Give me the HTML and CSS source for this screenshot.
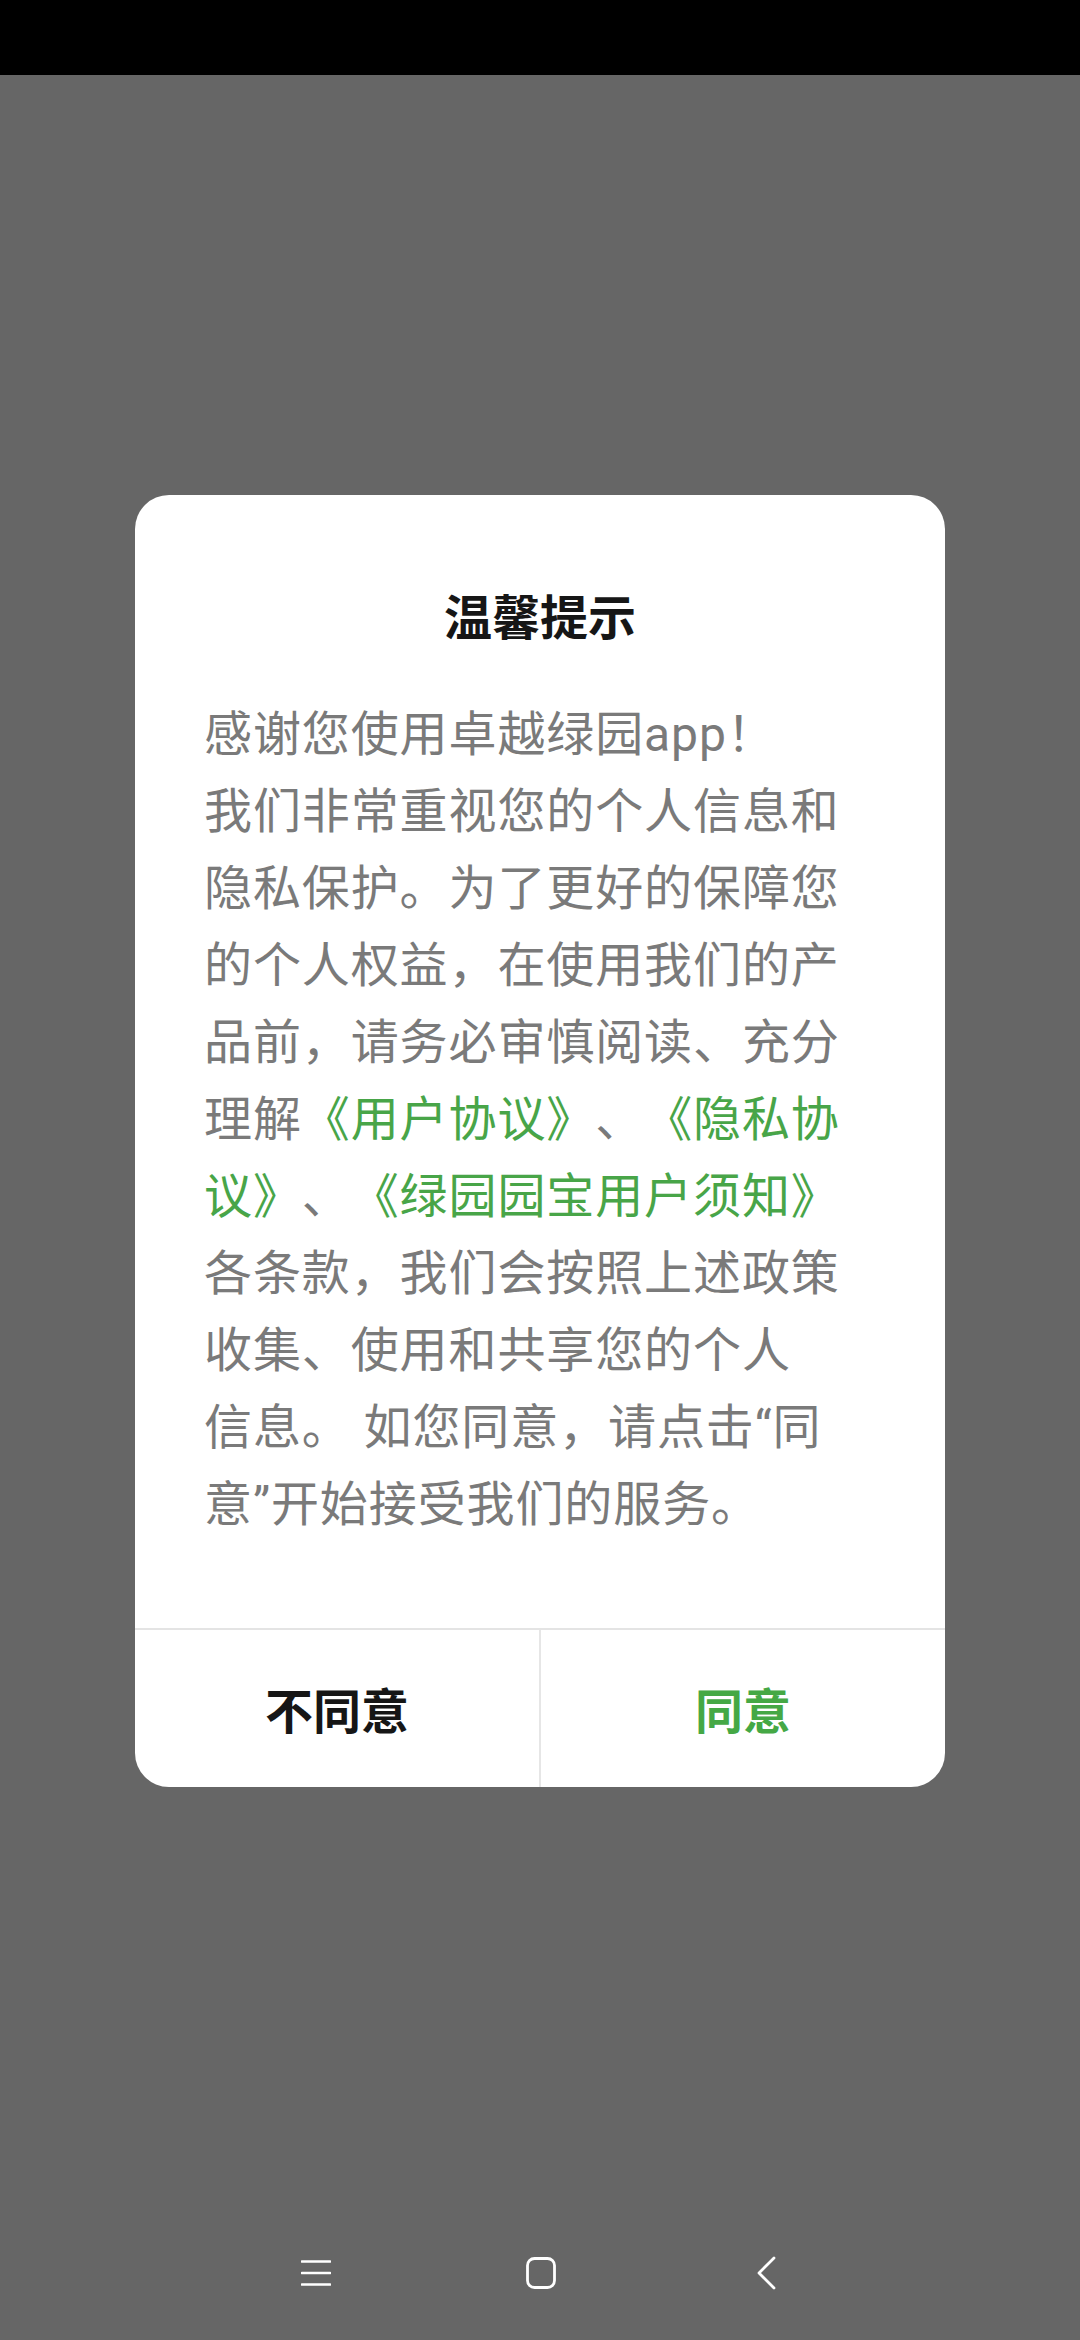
FILE: index.html
```html
<!DOCTYPE html>
<html lang="zh-CN">
<head>
<meta charset="utf-8">
<title>温馨提示</title>
<link rel="stylesheet" href="styles.css">
</head>
<body>
<div class="status-bar"></div>
<main class="stage">
  <section class="dialog">
    <div class="dialog-content">
      <h1 class="dialog-title">温馨提示</h1>
      <p class="dialog-body">感谢您使用卓越绿园app！<br>我们非常重视您的个人信息和<br>隐私保护。为了更好的保障您<br>的个人权益，在使用我们的产<br>品前，请务必审慎阅读、充分<br>理解<span class="link">《用户协议》</span>、<span class="link">《隐私协<br>议》</span>、<span class="link">《绿园园宝用户须知》</span><br>各条款，我们会按照上述政策<br>收集、使用和共享您的个人<br>信息。 如您同意，请点击“同<br>意”开始接受我们的服务。</p>
    </div>
    <div class="dialog-actions">
      <button class="action action-decline">不同意</button>
      <button class="action action-accept">同意</button>
    </div>
  </section>
</main>
<nav class="nav-bar">
  <span class="nav-icon">
    <svg width="30" height="30" viewBox="0 0 30 30"><path d="M1 3.5H29M1 15H29M1 26.5H29" stroke="#fff" stroke-width="2.6" stroke-linecap="round" fill="none"/></svg>
  </span>
  <span class="nav-icon">
    <svg width="30" height="32" viewBox="0 0 30 32"><rect x="1.5" y="1.5" width="27" height="29" rx="7" ry="7" stroke="#fff" stroke-width="2.8" fill="none"/></svg>
  </span>
  <span class="nav-icon">
    <svg width="30" height="34" viewBox="0 0 30 34"><path d="M23 2L8 17L23 32" stroke="#fff" stroke-width="2.8" stroke-linecap="round" stroke-linejoin="round" fill="none"/></svg>
  </span>
</nav>
</body>
</html>
```

FILE: styles.css
```css
html, body {
  margin: 0;
  padding: 0;
}

body {
  width: 1080px;
  height: 2340px;
  display: flex;
  flex-direction: column;
  background: #666666;
  font-family: Roboto, "Noto Sans CJK SC", sans-serif;
  overflow: hidden;
}

.status-bar {
  height: 75px;
  flex: none;
  background: #000000;
}

.stage {
  flex: 1;
  display: flex;
  align-items: center;
  justify-content: center;
}

.dialog {
  width: 810px;
  background: #ffffff;
  border-radius: 34px;
  overflow: hidden;
  display: flex;
  flex-direction: column;
}

.dialog-content {
  padding: 100px 40px 85px 69px;
  display: flex;
  flex-direction: column;
  gap: 53px;
}

.dialog-title {
  margin: 0;
  text-align: center;
  font-size: 48px;
  line-height: 48px;
  font-weight: 700;
  color: #161616;
  padding-right: 29px;
}

.dialog-body {
  margin: 0;
  font-size: 48px;
  line-height: 77px;
  letter-spacing: 0.9px;
  color: #7a7a7a;
  white-space: nowrap;
  text-spacing-trim: space-all;
  font-feature-settings: "halt" 0, "chws" 0;
}

.link {
  color: #48a548;
}

.dialog-actions {
  display: flex;
  border-top: 2px solid #e4e4e4;
  height: 157px;
}

.action {
  flex: 1;
  border: none;
  background: transparent;
  margin: 0;
  padding: 0;
  font-family: Roboto, "Noto Sans CJK SC", sans-serif;
  font-size: 48px;
  font-weight: 700;
  display: flex;
  align-items: center;
  justify-content: center;
}

.action-decline {
  color: #161616;
}

.action-accept {
  color: #45a845;
  border-left: 2px solid #e6e6e6;
}

.nav-bar {
  height: 134px;
  flex: none;
  display: flex;
  align-items: center;
  justify-content: center;
  gap: 195px;
  padding-left: 2px;
}

.nav-icon {
  width: 30px;
  height: 34px;
  display: flex;
  align-items: center;
  justify-content: center;
}
```
